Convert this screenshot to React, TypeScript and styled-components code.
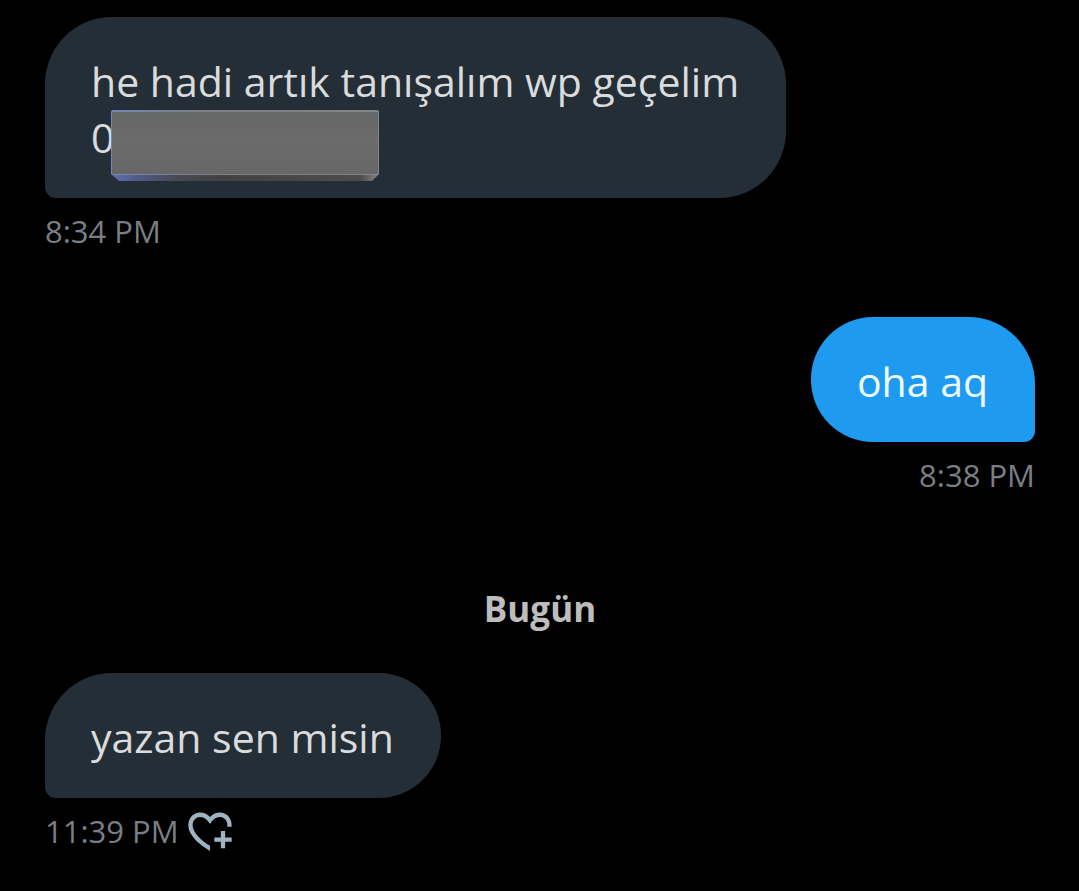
import React from "react";
import styled, { createGlobalStyle } from "styled-components";

const GlobalStyle = createGlobalStyle`
  *, *::before, *::after {
    box-sizing: border-box;
  }

  body {
    margin: 0;
    background: #000;
    color: #d9dbdd;
    font-family: "Open Sans", "Noto Sans", sans-serif;
  }
`;

type Side = "in" | "out";

const Conversation = styled.main`
  display: flex;
  flex-direction: column;
  padding: 17px 44px 32px 45px;
`;

const Message = styled.article<{ $side: Side }>`
  display: flex;
  flex-direction: column;
  align-items: ${({ $side }) => ($side === "in" ? "flex-start" : "flex-end")};

  & + & {
    margin-top: 60px;
  }
`;

const Bubble = styled.div<{ $side: Side; $multiline?: boolean }>`
  position: relative;
  max-width: 80%;
  padding: 36px 47px 33px 46px;
  background: ${({ $side }) => ($side === "in" ? "#242e36" : "#1e9bf0")};
  color: ${({ $side }) => ($side === "in" ? "#d9dbdd" : "#effcff")};
  border-radius: ${({ $side, $multiline }) => {
    const round = $multiline ? "67px" : "62px";
    return $side === "in"
      ? `67px ${round} ${round} 11px`
      : `${round} 67px 11px ${round}`;
  }};
`;

const Text = styled.p`
  margin: 0;
  font-size: 41px;
  line-height: 56px;
`;

const Meta = styled.footer`
  display: flex;
  align-items: center;
  gap: 5px;
  height: 59px;
  padding-top: 7px;
`;

const Time = styled.time`
  color: #7b7e84;
  font-size: 31px;
  line-height: 48px;
`;

const DayHeading = styled.h2`
  margin: 83px 0 39px;
  color: #bdbdbd;
  font-size: 35px;
  font-weight: 700;
  line-height: 50px;
  text-align: center;
`;

const ReactButton = styled.button`
  display: flex;
  margin: 0;
  padding: 0;
  border: 0;
  background: none;
  color: #9fb4c3;
  cursor: pointer;
`;

const CoverBlock = styled.svg`
  position: absolute;
  top: 93px;
  left: 66px;
`;

function Cover() {
  return (
    <CoverBlock width="268" height="71" viewBox="0 0 268 71" aria-hidden="true">
      <defs>
        <linearGradient id="face" x1="0" y1="0" x2="0" y2="1">
          <stop offset="0" stopColor="#666768" />
          <stop offset="0.45" stopColor="#6b6b6b" />
          <stop offset="1" stopColor="#676768" />
        </linearGradient>
        <linearGradient id="edge" x1="0" y1="0" x2="1" y2="0">
          <stop offset="0" stopColor="#7585b5" />
          <stop offset="0.3" stopColor="#7c8087" />
          <stop offset="1" stopColor="#818488" />
        </linearGradient>
        <linearGradient id="base" x1="0" y1="0" x2="1" y2="0">
          <stop offset="0" stopColor="#5e70b0" />
          <stop offset="0.1" stopColor="#4f5a88" />
          <stop offset="0.24" stopColor="#484a55" />
          <stop offset="0.4" stopColor="#424243" />
          <stop offset="0.93" stopColor="#4c4c4d" />
          <stop offset="1" stopColor="#858687" />
        </linearGradient>
      </defs>
      <path d="M0 62H268V64L261 71H8L0 64Z" fill="url(#base)" />
      <rect width="268" height="65" rx="2" fill="url(#edge)" />
      <rect x="1" y="2" width="266" height="62" rx="1" fill="url(#face)" />
    </CoverBlock>
  );
}

function HeartPlus() {
  return (
    <svg width="52" height="52" viewBox="0 0 24 24" fill="currentColor" aria-hidden="true">
      <path d="M17 12v3h-3v2h3v3h2v-3h3v-2h-3v-3h-2zm-5 6.839c-3.871-2.34-6.053-4.639-7.127-6.609-1.112-2.04-1.031-3.7-.479-4.82.561-1.13 1.667-1.84 2.91-1.91 1.222-.06 2.68.51 3.892 2.16l.806 1.09.805-1.09c1.211-1.65 2.668-2.22 3.89-2.16 1.242.07 2.347.78 2.908 1.91.334.677.395 1.554.395 2.59h2c0-1.283-.102-2.469-.602-3.48-.887-1.79-2.647-2.91-4.601-3.01-1.65-.09-3.367.56-4.796 2.01-1.43-1.45-3.147-2.1-4.798-2.01-1.954.1-3.714 1.22-4.601 3.01-.896 1.81-.846 4.17.514 6.67 1.353 2.48 4.003 5.12 8.382 7.67l.502.299v-2.32z" />
    </svg>
  );
}

export default function App() {
  return (
    <>
      <GlobalStyle />
      <Conversation>
        <Message $side="in">
          <Bubble $side="in" $multiline>
            <Text>
              he hadi artık tanışalım wp geçelim
              <br />0
            </Text>
            <Cover />
          </Bubble>
          <Meta>
            <Time>8:34 PM</Time>
          </Meta>
        </Message>

        <Message $side="out">
          <Bubble $side="out">
            <Text>oha aq</Text>
          </Bubble>
          <Meta>
            <Time>8:38 PM</Time>
          </Meta>
        </Message>

        <DayHeading>Bugün</DayHeading>

        <Message $side="in">
          <Bubble $side="in">
            <Text>yazan sen misin</Text>
          </Bubble>
          <Meta>
            <Time>11:39 PM</Time>
            <ReactButton type="button" aria-label="Tepki ekle">
              <HeartPlus />
            </ReactButton>
          </Meta>
        </Message>
      </Conversation>
    </>
  );
}
